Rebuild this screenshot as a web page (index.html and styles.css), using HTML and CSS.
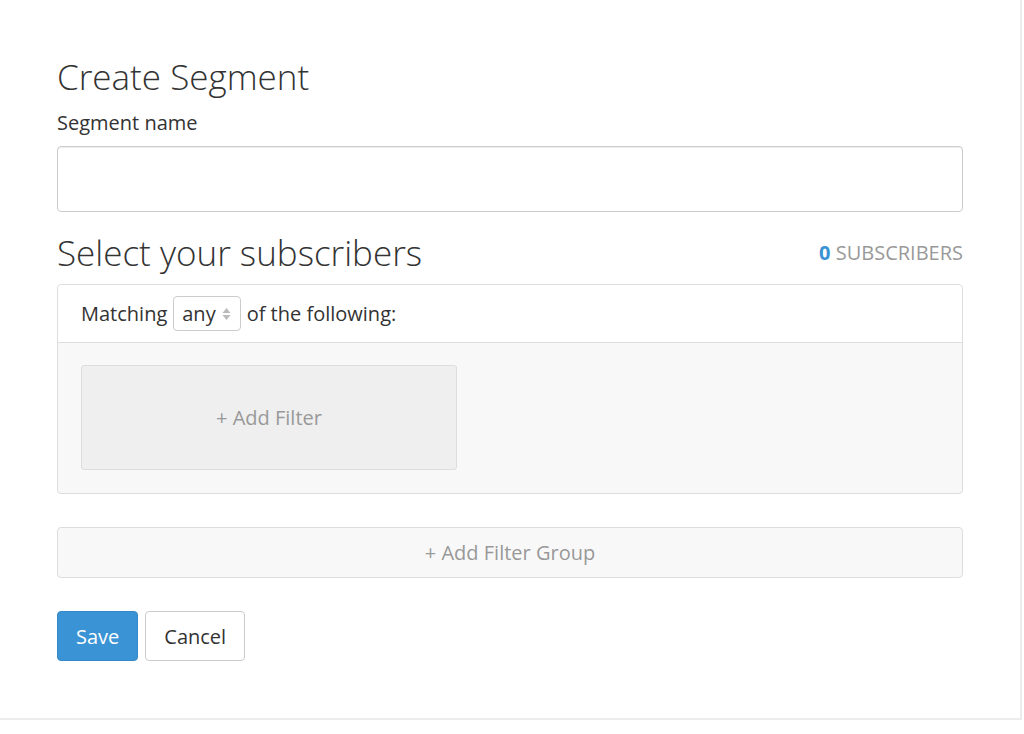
FILE: index.html
```html
<!DOCTYPE html>
<html lang="en">

<head>
    <meta charset="UTF-8">
    <meta name="viewport" content="width=device-width, initial-scale=1.0">
    <title>Create Segment</title>
    <link rel="stylesheet" href="styles.css">
</head>

<body>
    <div class="panel">
        <h1 class="page-title">Create Segment</h1>

        <label class="field-label" for="segment-name">Segment name</label>
        <input type="text" id="segment-name" class="text-input">

        <div class="section-head">
            <h2 class="section-title">Select your subscribers</h2>
            <div class="subscriber-count"><span class="count">0</span> SUBSCRIBERS</div>
        </div>

        <div class="filter-group">
            <div class="filter-group-head">
                Matching
                <span class="match-select">any
                    <svg width="9" height="14" viewBox="0 0 9 14">
                        <path d="M4.5 1 L8.5 6 H0.5 Z" fill="#bbb" />
                        <path d="M4.5 13 L8.5 8 H0.5 Z" fill="#bbb" />
                    </svg>
                </span>
                of the following:
            </div>
            <div class="filter-group-body">
                <div class="add-filter">+ Add Filter</div>
            </div>
        </div>

        <div class="add-group">+ Add Filter Group</div>

        <div class="actions">
            <button class="btn btn-primary">Save</button>
            <button class="btn btn-default">Cancel</button>
        </div>
    </div>
</body>

</html>
```

FILE: styles.css
```css
body {
    font-family: "Open Sans", "Noto Sans", sans-serif;
    margin: 0;
    background-color: #fff;
    color: #333;
}

/* Main panel */
.panel {
    width: 1022px;
    height: 720px;
    box-sizing: border-box;
    padding: 53px 57px 0 57px;
    border-right: 2px solid #ececec;
    border-bottom: 2px solid #ececec;
}

.page-title {
    font-size: 35px;
    font-weight: 300;
    margin: 0;
    line-height: 48px;
}

.field-label {
    display: block;
    font-size: 20px;
    margin-top: 8px;
    line-height: 28px;
}

.text-input {
    display: block;
    width: 100%;
    height: 66px;
    box-sizing: border-box;
    margin-top: 9px;
    border: 1px solid #ccc;
    border-radius: 4px;
    box-shadow: inset 0 1px 1px rgba(0, 0, 0, 0.075);
}

/* Subscribers heading */
.section-head {
    display: flex;
    justify-content: space-between;
    align-items: center;
    margin-top: 17px;
}

.section-title {
    font-size: 35px;
    font-weight: 300;
    margin: 0;
    line-height: 48px;
}

.subscriber-count {
    font-size: 20px;
    color: #999;
    padding-bottom: 2px;
}

.count {
    color: #3a93d5;
    font-weight: 700;
}

/* Filter group box */
.filter-group {
    margin-top: 7px;
    border: 1px solid #ddd;
    border-radius: 4px;
    background-color: #f8f8f8;
}

.filter-group-head {
    background-color: #fff;
    border-bottom: 1px solid #ddd;
    border-radius: 4px 4px 0 0;
    height: 58px;
    box-sizing: border-box;
    padding: 0 23px;
    display: flex;
    align-items: center;
    gap: 6px;
    font-size: 20px;
}

.match-select {
    display: inline-flex;
    align-items: center;
    gap: 6px;
    height: 35px;
    box-sizing: border-box;
    padding: 0 9px 0 8px;
    border: 1px solid #ccc;
    border-radius: 4px;
}

.filter-group-body {
    padding: 22px 23px 23px 23px;
}

.add-filter {
    width: 376px;
    height: 105px;
    box-sizing: border-box;
    background-color: #efefef;
    border: 1px solid #ddd;
    border-radius: 3px;
    display: flex;
    align-items: center;
    justify-content: center;
    color: #999;
    font-size: 20px;
}

.add-group {
    margin-top: 33px;
    height: 51px;
    box-sizing: border-box;
    background-color: #f8f8f8;
    border: 1px solid #ddd;
    border-radius: 4px;
    display: flex;
    align-items: center;
    justify-content: center;
    color: #999;
    font-size: 20px;
}

/* Buttons */
.actions {
    margin-top: 33px;
    display: flex;
    gap: 7px;
}

.btn {
    font-family: inherit;
    font-size: 20px;
    height: 50px;
    padding: 0 18px;
    border-radius: 4px;
    cursor: pointer;
}

.btn-primary {
    background-color: #3a93d5;
    border: 1px solid #3589c8;
    color: #fff;
}

.btn-default {
    background-color: #fff;
    border: 1px solid #ccc;
    color: #333;
}
```
